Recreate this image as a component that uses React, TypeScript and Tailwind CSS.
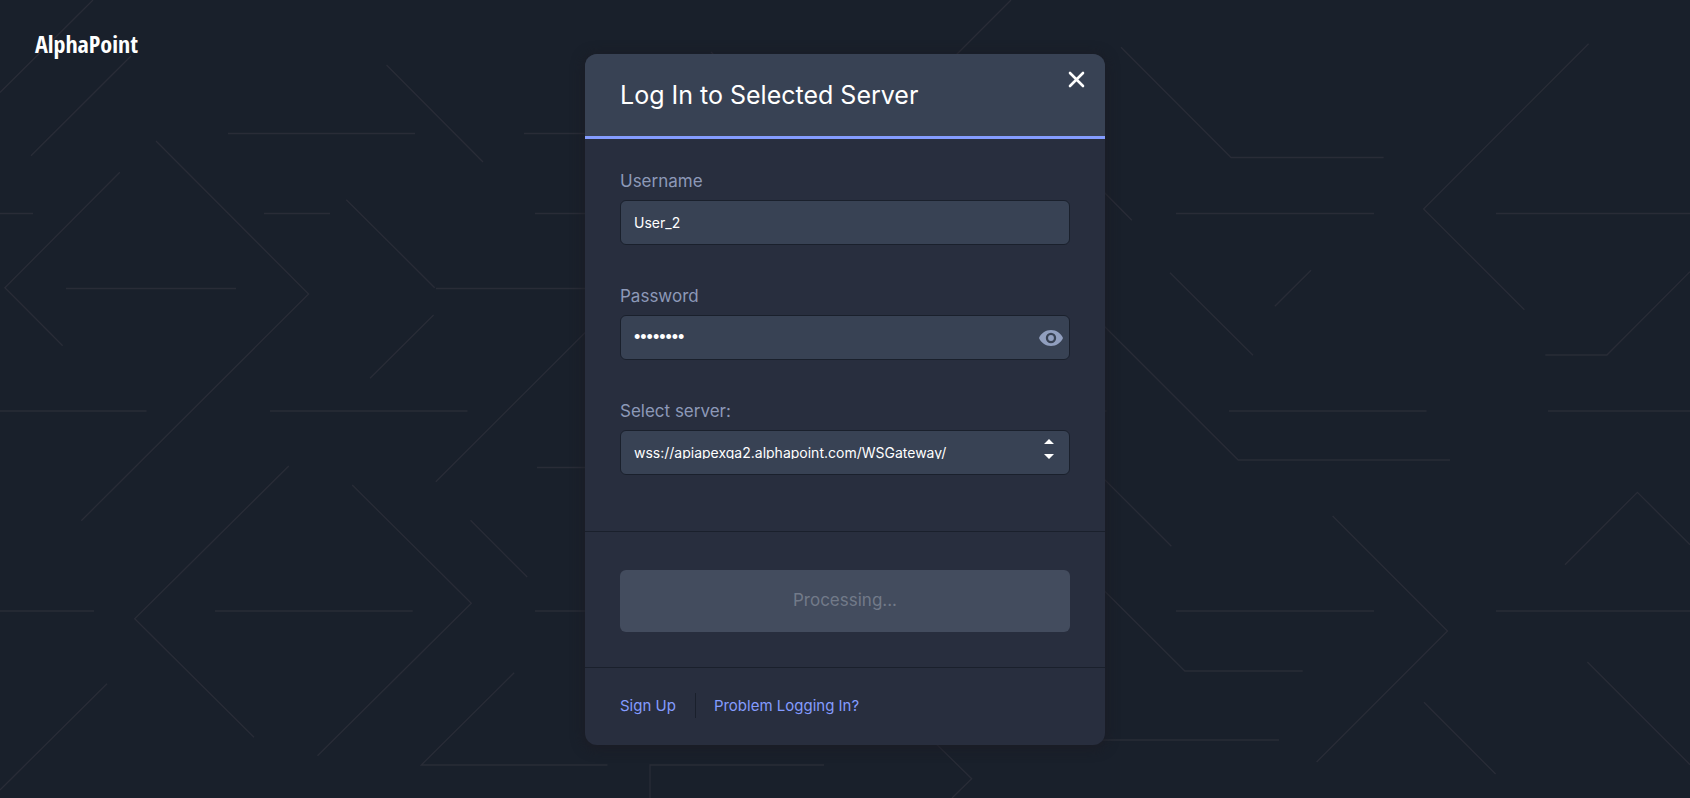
import { useState } from "react";

const LINES = [
  "M93 0L0 92.5", "M131 56L31 155.7", "M386.5 65L483 162", "M228 133.5H415", "M524 133.5H600",
  "M156 141L308.6 294L81.3 520.7", "M119.8 172.3L4.9 287.7L62.7 345.7", "M0 213.5H33", "M264 213.5H330",
  "M535 213.5H600", "M66 288.5H236", "M346.3 199.7L434.7 287.7", "M436 288.5H600", "M433.6 315L370 378.3",
  "M600 317.7L435.8 481.7", "M0 411H146.6", "M270 411H467.5", "M537 467.5H600", "M288.8 466L134.7 618.7L254 737.3",
  "M352.2 485L471.3 603.3L317.5 755.7", "M470.5 520.3L527.2 577", "M0 611H94", "M215 611H412.7", "M535 611H600",
  "M107 683.7L0 790", "M514.2 672.7L421.3 765H607.5", "M824 765H650V798", "M925 733L971.7 778.7L952 798",
  "M1011 0L950 61", "M711 52L720 61", "M1090 178L1131.9 220.3", "M1121 47.3L1231 157.5H1383.7", "M1176 213.5H1374",
  "M1588.6 43.7L1423.6 209L1524.4 309.7", "M1496 213.5H1690", "M1170 272.7L1253 355.3", "M1311 270.3L1274.8 306.3",
  "M1545.3 355H1606.9L1690 271.7", "M1090 312L1238.2 460H1450", "M1090 411H1106.5", "M1229 411H1426.6",
  "M1548 411H1690", "M1090 465L1171.4 546.3", "M1332.6 516L1447.5 631L1316.6 762", "M1565 564.7L1637.4 492.3L1690 544.7",
  "M1090 576.5L1184.8 671H1302.7", "M1176 611H1374", "M1496 611H1690", "M1090 740H1279", "M1424 702.3L1495.6 774",
  "M1587.4 662L1690 764.7",
];

const SERVERS = ["wss://apiapexqa2.alphapoint.com/WSGateway/"];

const labelClass = "block text-[17px] leading-[22px] text-[#8d99b8]";
const fieldClass =
  "block h-[45px] w-full rounded-md border border-[#1a202c] bg-[#384254] px-[13px] text-white outline-none";

function Backdrop() {
  return (
    <svg
      className="absolute inset-0 h-full w-full"
      viewBox="0 0 1690 798"
      preserveAspectRatio="xMidYMid slice"
      fill="none"
      stroke="#292c37"
      strokeWidth="1.3"
      aria-hidden="true"
    >
      <path d={LINES.join("")} />
    </svg>
  );
}

export default function App() {
  const [username, setUsername] = useState("User_2");
  const [password, setPassword] = useState("12345678");
  const [visible, setVisible] = useState(false);

  return (
    <div className="relative flex min-h-screen flex-col overflow-hidden bg-[#19202b] font-[Inter,sans-serif]">
      <Backdrop />
      <header className="absolute top-0 left-0 px-[35px] py-7">
        <a
          href="#home"
          className="block font-['Open_Sans_Condensed','Roboto_Condensed',sans-serif] text-2xl leading-8 font-bold text-white"
        >
          AlphaPoint
        </a>
      </header>

      <main className="relative mx-auto mt-[54px] mb-[53px] w-full max-w-[520px] overflow-hidden rounded-xl bg-[#282e3e] shadow-[0_2px_12px_2px_rgba(28,28,36,0.8)]">
        <div className="flex items-start justify-between border-b-[3px] border-[#849cff] bg-[#384254] pr-5 pl-[35px]">
          <h1 className="py-[25px] text-[25px] leading-8 text-white">Log In to Selected Server</h1>
          <button type="button" aria-label="Close" className="mt-[17px]">
            <svg className="size-[17px]" viewBox="0 0 17 17" fill="none" stroke="#fff" strokeWidth="2.6" strokeLinecap="round">
              <path d="M2 2L15 15M15 2L2 15" />
            </svg>
          </button>
        </div>

        <form onSubmit={(e) => e.preventDefault()}>
          <div className="flex flex-col gap-10 px-[35px] pt-[31px] pb-14">
            <div className="flex flex-col gap-2">
              <label htmlFor="username" className={labelClass}>Username</label>
              <input
                id="username"
                type="text"
                className={`${fieldClass} text-sm`}
                value={username}
                onChange={(e) => setUsername(e.target.value)}
              />
            </div>
            <div className="flex flex-col gap-2">
              <label htmlFor="password" className={labelClass}>Password</label>
              <div className="relative">
                <input
                  id="password"
                  type={visible ? "text" : "password"}
                  className={`${fieldClass} ${visible ? "text-sm" : "font-['Liberation_Sans',sans-serif] text-lg"}`}
                  value={password}
                  onChange={(e) => setPassword(e.target.value)}
                />
                <button
                  type="button"
                  aria-label="Show password"
                  onClick={() => setVisible(!visible)}
                  className="absolute inset-y-0 right-[7px] flex items-center"
                >
                  <svg className="h-4 w-6" viewBox="0 0 24 16" fill="#919fbf" fillRule="evenodd">
                    <path d="M12 0C6.6 0 2 3.300 0 8C2 12.700 6.600 16 12 16S22 12.700 24 8C22 3.300 17.400 0 12 0ZM12 13.200A5.200 5.200 0 1 1 12 2.800A5.200 5.200 0 0 1 12 13.200ZM12 5.100A2.900 2.900 0 1 0 12 10.900A2.900 2.900 0 0 0 12 5.100Z" />
                  </svg>
                </button>
              </div>
            </div>
            <div className="flex flex-col gap-2">
              <label htmlFor="server" className={labelClass}>Select server:</label>
              <div className="relative">
                <select
                  id="server"
                  className={`${fieldClass} appearance-none pt-3 pb-[15px] text-sm`}
                >
                  {SERVERS.map((s) => (
                    <option key={s}>{s}</option>
                  ))}
                </select>
                <svg
                  className="pointer-events-none absolute top-[9px] right-4 h-5 w-[10px]"
                  viewBox="0 0 10 20"
                  fill="#fff"
                  aria-hidden="true"
                >
                  <path d="M0 5L5 0L10 5ZM0 15L5 20L10 15Z" />
                </svg>
              </div>
            </div>
          </div>
          <div className="border-y border-[#1a202c] px-[35px] pt-[38px] pb-[35px]">
            <button
              type="submit"
              disabled
              className="h-[62px] w-full rounded-md bg-[#434c5e] text-[17px] text-[#727a89]"
            >
              Processing...
            </button>
          </div>
        </form>

        <nav className="flex items-center px-[35px] pt-[25px] pb-[27px] text-[15px] leading-[25px] text-[#849cff]">
          <a href="#signup" className="border-r border-[#1a202c] pr-[19px]">Sign Up</a>
          <a href="#help" className="pl-[18px]">Problem Logging In?</a>
        </nav>
      </main>
    </div>
  );
}
